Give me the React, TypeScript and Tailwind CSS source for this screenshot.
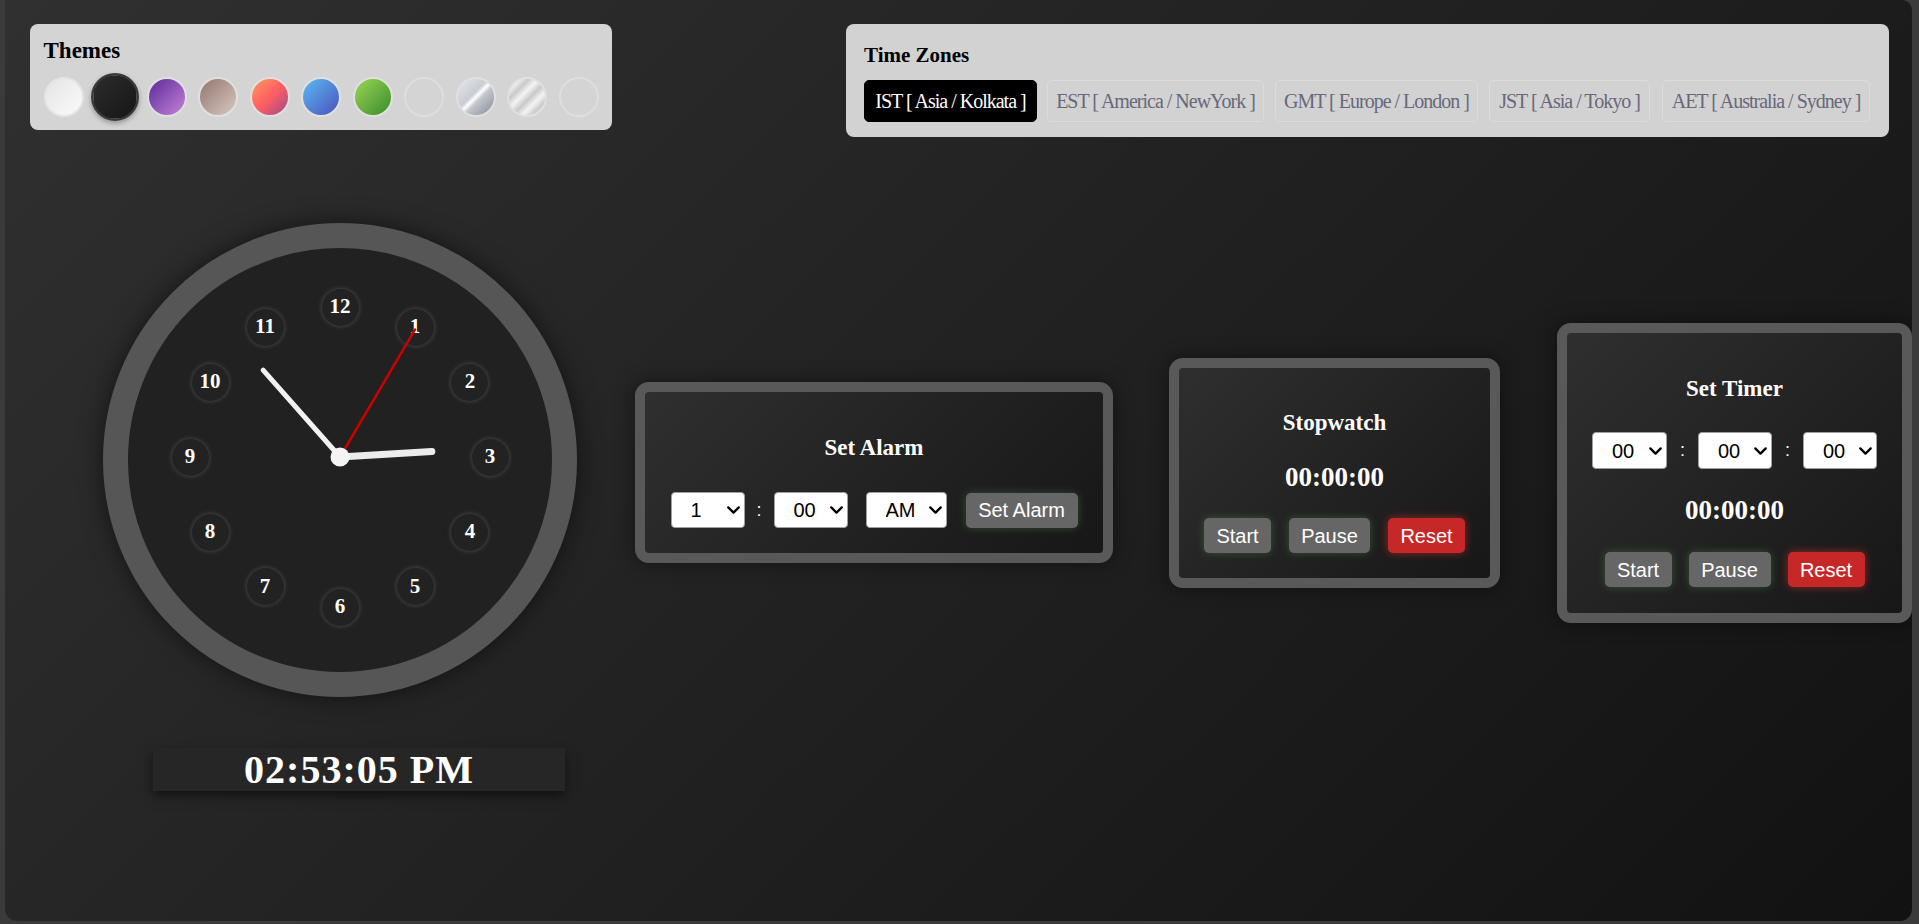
import { ChevronDown } from 'lucide-react'

const themes = [
  'bg-[linear-gradient(135deg,#e4e4e4,#fbfbfb)] border-[#e4e4e4]',
  'bg-[linear-gradient(135deg,#2c2c2c,#161616)] border-[#3a3a3a] scale-[1.2] shadow-[0_2px_4px_rgba(0,0,0,0.3)]',
  'bg-[linear-gradient(135deg,#5c2a98,#c482d8)] border-[#e0e0e0]',
  'bg-[linear-gradient(135deg,#94766c,#d6c8c2)] border-[#e0e0e0]',
  'bg-[linear-gradient(135deg,#ff9a5c,#ff5e62_50%,#9a4a90)] border-[#e0e0e0]',
  'bg-[linear-gradient(135deg,#5abaf2,#4a52bb)] border-[#e0e0e0]',
  'bg-[linear-gradient(135deg,#9cd655,#388c2a)] border-[#e0e0e0]',
  'bg-transparent border-[#dedede]',
  'bg-[linear-gradient(135deg,#e6e8ee_0%,#c9ccd3_42%,#ffffff_50%,#c3c6cd_58%,#858a93_100%)] border-[#e0e0e0]',
  'bg-[repeating-linear-gradient(135deg,#c9c9c9_0px,#f4f4f4_7px,#c9c9c9_14px)] border-[#e0e0e0]',
  'bg-transparent border-[#dedede]',
]

// widths taken from the layout, the text sits centred in each
const zones = [
  { label: 'IST [ Asia / Kolkata ]', w: 'w-[173px]', ml: '' },
  { label: 'EST [ America / NewYork ]', w: 'w-[217px]', ml: 'ml-[10px]' },
  { label: 'GMT [ Europe / London ]', w: 'w-[203px]', ml: 'ml-[11px]' },
  { label: 'JST [ Asia / Tokyo ]', w: 'w-[161px]', ml: 'ml-[11px]' },
  { label: 'AET [ Australia / Sydney ]', w: 'w-[208px]', ml: 'ml-[12px]' },
]

function Select({ value, className }: { value: string; className: string }) {
  return (
    <div className="relative">
      <select
        defaultValue={value}
        className={`appearance-none rounded-[4px] border border-[#a0a0a0] bg-white pl-[19px] font-['Liberation_Sans',sans-serif] text-[20px] text-black outline-none ${className}`}
      >
        <option value={value}>{value}</option>
      </select>
      <ChevronDown
        size={21}
        strokeWidth={2.6}
        className="pointer-events-none absolute right-[1px] top-1/2 -translate-y-1/2 text-black"
      />
    </div>
  )
}

function Btn({ label, w, red }: { label: string; w: string; red?: boolean }) {
  return (
    <button
      type="button"
      className={`h-[35px] rounded-[5px] font-['Liberation_Sans',sans-serif] text-[20px] text-white ${w} ${
        red
          ? 'bg-[#c62828] shadow-[0_0_8px_rgba(255,50,50,0.5)]'
          : 'bg-[#666666] shadow-[0_0_8px_rgba(90,170,90,0.35)]'
      }`}
    >
      {label}
    </button>
  )
}

function Colon({ w }: { w: string }) {
  return <span className={`text-center font-['Liberation_Sans',sans-serif] text-[18px] text-white ${w}`}>:</span>
}

function Clock() {
  const cx = 212
  const cy = 209
  const hand = (deg: number, len: number) => {
    const r = (deg * Math.PI) / 180
    return { x2: cx + len * Math.sin(r), y2: cy - len * Math.cos(r) }
  }
  const hour = hand(86.5, 92)
  const minute = hand(318.5, 116)
  const second = hand(30.5, 148)

  return (
    <div className="relative h-[474px] w-[474px] rounded-full border-[25px] border-[#565656] bg-[#212121] shadow-[0_0_25px_rgba(0,0,0,0.55)]">
      {Array.from({ length: 12 }, (_, i) => {
        const n = i + 1
        const a = (n * 30 * Math.PI) / 180
        return (
          <div
            key={n}
            className="absolute flex h-[37px] w-[37px] items-center justify-center rounded-full bg-[#222222] font-['Liberation_Serif',serif] text-[21px] font-bold text-white shadow-[0_0_5px_rgba(255,255,255,0.22)]"
            style={{ left: cx + 150 * Math.sin(a) - 18.5, top: cy - 150 * Math.cos(a) - 18.5 }}
          >
            {n}
          </div>
        )
      })}
      <svg className="absolute inset-0" width="424" height="424" viewBox="0 0 424 424">
        <line x1={cx} y1={cy} {...minute} stroke="#f2f2f2" strokeWidth="5" strokeLinecap="round" />
        <line x1={cx} y1={cy} {...hour} stroke="#ececec" strokeWidth="7" strokeLinecap="round" />
        <line x1={cx} y1={cy} {...second} stroke="#cc0000" strokeWidth="2.5" strokeLinecap="round" />
        <circle cx={cx} cy={cy} r="9.5" fill="#f4f4f4" />
      </svg>
    </div>
  )
}

export default function App() {
  return (
    <div className="h-screen w-full bg-[#3b3b3b] pb-[3px] pl-[5px] pr-[7px]">
      <div className="h-full overflow-hidden rounded-b-[12px] rounded-tr-[10px] bg-[linear-gradient(135deg,#303030,#121212)]">
        {/* top row: themes + time zones */}
        <div className="flex items-start justify-between pl-[25px] pr-[23px] pt-[24px]">
          <div className="rounded-[8px] bg-[#d4d4d4] px-[13.5px] pb-[13px] pt-[13px]">
            <div className="font-['Liberation_Serif',serif] text-[23px] font-bold leading-[28px] text-black">Themes</div>
            <div className="mt-[12px] flex gap-[11.5px]">
              {themes.map((t, i) => (
                <div key={i} className={`h-[40px] w-[40px] rounded-full border-2 ${t}`} />
              ))}
            </div>
          </div>

          <div className="rounded-[8px] bg-[#d2d2d2] pb-[15px] pl-[18px] pr-[19px] pt-[18px]">
            <div className="font-['Liberation_Serif',serif] text-[21px] font-bold leading-[26px] text-black">Time Zones</div>
            <div className="mt-[12px] flex">
              {zones.map((z, i) => (
                <button
                  key={z.label}
                  type="button"
                  className={`flex h-[42px] items-center justify-center whitespace-nowrap rounded-[5px] border font-['Liberation_Serif',serif] text-[20px] tracking-[-1px] ${z.w} ${z.ml} ${
                    i === 0 ? 'border-black bg-black text-white' : 'border-[#dcdcdc] text-[#68687a]'
                  }`}
                >
                  {z.label}
                </button>
              ))}
            </div>
          </div>
        </div>

        {/* main row */}
        <div className="flex items-start pl-[98px]">
          <div className="mt-[86px] flex flex-col">
            <Clock />
            <div className="ml-[50px] mt-[51px] flex h-[43px] w-[412px] items-center justify-center bg-[#262626] font-['Liberation_Serif',serif] text-[40px] font-bold tracking-[1px] text-white shadow-[0_5px_10px_rgba(0,0,0,0.5)]">
              02:53:05 PM
            </div>
          </div>

          {/* alarm */}
          <div className="ml-[58px] mt-[245px] flex h-[181px] w-[478px] flex-col items-center rounded-[14px] border-[10px] border-[#595959] bg-[linear-gradient(135deg,#2f2f2f,#171717)] pt-[41px] shadow-[0_0_20px_rgba(0,0,0,0.45)]">
            <div className="font-['Liberation_Serif',serif] text-[23px] font-bold leading-[30px] text-white">Set Alarm</div>
            <div className="mt-[29px] flex items-center">
              <Select value="1" className="h-[36px] w-[74px]" />
              <Colon w="w-[29px]" />
              <Select value="00" className="h-[36px] w-[74px]" />
              <div className="ml-[18px]">
                <Select value="AM" className="h-[36px] w-[81px]" />
              </div>
              <div className="ml-[19px]">
                <Btn label="Set Alarm" w="w-[112px]" />
              </div>
            </div>
          </div>

          {/* stopwatch */}
          <div className="ml-[56px] mt-[221px] flex h-[230px] w-[331px] flex-col items-center rounded-[14px] border-[10px] border-[#595959] bg-[linear-gradient(135deg,#2f2f2f,#171717)] pt-[40px] shadow-[0_0_20px_rgba(0,0,0,0.45)]">
            <div className="font-['Liberation_Serif',serif] text-[23px] font-bold leading-[30px] text-white">Stopwatch</div>
            <div className="mt-[22px] font-['Liberation_Serif',serif] text-[27px] font-bold leading-[34px] text-white">00:00:00</div>
            <div className="mt-[24px] flex gap-[18px]">
              <Btn label="Start" w="w-[67px]" />
              <Btn label="Pause" w="w-[81px]" />
              <Btn label="Reset" w="w-[77px]" red />
            </div>
          </div>

          {/* timer */}
          <div className="ml-[57px] mt-[186px] flex h-[300px] w-[355px] shrink-0 flex-col items-center rounded-[14px] border-[10px] border-[#595959] bg-[linear-gradient(135deg,#2f2f2f,#171717)] pt-[41px] shadow-[0_0_20px_rgba(0,0,0,0.45)]">
            <div className="font-['Liberation_Serif',serif] text-[23px] font-bold leading-[30px] text-white">Set Timer</div>
            <div className="mt-[28px] flex items-center">
              <Select value="00" className="h-[37px] w-[75px]" />
              <Colon w="w-[31px]" />
              <Select value="00" className="h-[37px] w-[74px]" />
              <Colon w="w-[31px]" />
              <Select value="00" className="h-[37px] w-[74px]" />
            </div>
            <div className="mt-[24px] font-['Liberation_Serif',serif] text-[27px] font-bold leading-[34px] text-white">00:00:00</div>
            <div className="mt-[25px] flex gap-[17px]">
              <Btn label="Start" w="w-[67px]" />
              <Btn label="Pause" w="w-[82px]" />
              <Btn label="Reset" w="w-[77px]" red />
            </div>
          </div>
        </div>
      </div>
    </div>
  )
}
